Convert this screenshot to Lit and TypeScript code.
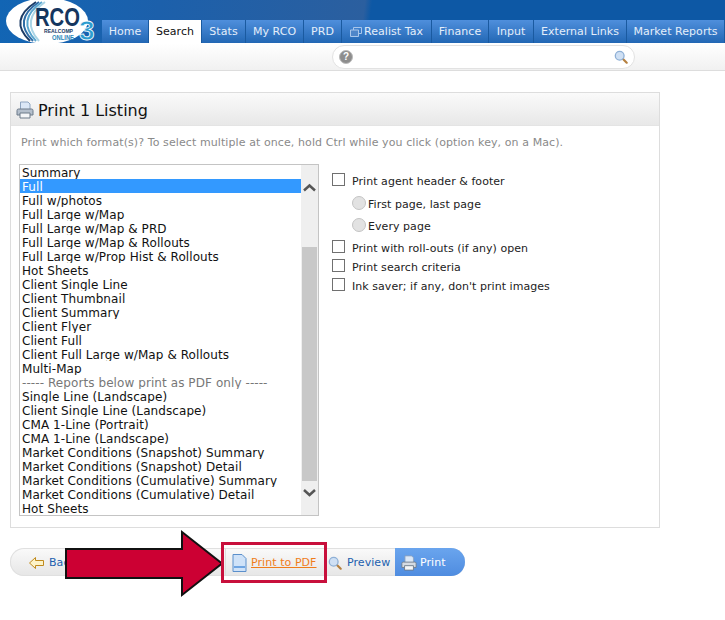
import { LitElement, html, css, svg } from 'lit';
import { customElement } from 'lit/decorators.js';

const TABS: [string, number][] = [
  ['Home', 47], ['Search', 53], ['Stats', 44], ['My RCO', 58], ['PRD', 38], ['Realist Tax', 90],
  ['Finance', 57], ['Input', 45], ['External Links', 93], ['Market Reports', 98],
];

const FORMATS = [
  'Summary', 'Full', 'Full w/photos', 'Full Large w/Map', 'Full Large w/Map & PRD', 'Full Large w/Map & Rollouts',
  'Full Large w/Prop Hist & Rollouts', 'Hot Sheets', 'Client Single Line', 'Client Thumbnail', 'Client Summary',
  'Client Flyer', 'Client Full', 'Client Full Large w/Map & Rollouts', 'Multi-Map',
  '----- Reports below print as PDF only -----', 'Single Line (Landscape)', 'Client Single Line (Landscape)',
  'CMA 1-Line (Portrait)', 'CMA 1-Line (Landscape)', 'Market Conditions (Snapshot) Summary',
  'Market Conditions (Snapshot) Detail', 'Market Conditions (Cumulative) Summary',
  'Market Conditions (Cumulative) Detail', 'Hot Sheets',
];

const printerIcon = (w: number, body = '#b4bfcc') => html`<svg width=${w} height=${w} viewBox="0 0 18 18">
  <path d="M4.500 1h7.500l2 2v6H4.500z" fill="#dbe7f6" stroke="#8ea4bf"/>
  <path d="M2.500 8h13q1.500 0 1.500 1.500V14H1V9.500Q1 8 2.500 8z" fill=${body} stroke="#6d7a89"/>
  <path d="M4 12h10v5H4z" fill="#f4f6f8" stroke="#6d7a89"/>
</svg>`;

const magnifier = (w: number) => html`<svg width=${w} height=${w} viewBox="0 0 16 16">
  <path d="M10 10l4.500 4.500" stroke="#b5803f" stroke-width="2.500" stroke-linecap="round"/>
  <circle cx="6.500" cy="6.500" r="5" fill="#cfe0f4" stroke="#8fb0d6" stroke-width="1.500"/>
</svg>`;

@customElement('app-root')
export class AppRoot extends LitElement {
  static styles = css`
    :host {
      display: block;
      position: relative;
      width: 725px;
      height: 620px;
      overflow: hidden;
      background: #fff;
      font-family: 'DejaVu Sans', Verdana, sans-serif;
      font-size: 11px;
      color: #222;
    }

    .top {
      height: 43px;
      display: flex;
      align-items: flex-end;
      padding-left: 102px;
      box-sizing: border-box;
      background: linear-gradient(97deg, #1265b4 0, #1c60ab 22%, #2b5f9f 50%, #0d58a5 51%, #0d58a5 100%);
      position: relative;
    }

    .logo {
      position: absolute;
      left: 6px;
      top: 0;
      overflow: visible;
    }

    .logo text {
      font-family: 'Liberation Sans', Arial, sans-serif;
    }

    .tab {
      height: 23px;
      box-sizing: border-box;
      border-right: 1px solid #1a5aa0;
      color: #e4eefa;
      white-space: nowrap;
      flex: none;
      background: linear-gradient(#4f8fdc, #2267b4);
      display: flex;
      justify-content: center;
      align-items: center;
      gap: 2px;
      letter-spacing: 0.05px;
    }

    .tab.active {
      background: #fff;
      color: #111;
    }

    .tools {
      height: 28px;
      display: flex;
      box-sizing: border-box;
      padding: 2px 0 0 332px;
      background: linear-gradient(#fff, #f1f1f1);
      border-bottom: 1px solid #ddd;
    }

    .search {
      width: 303px;
      height: 24px;
      box-sizing: border-box;
      background: #fff;
      border: 1px solid #e2e2e2;
      border-radius: 12px;
      display: flex;
      align-items: center;
      justify-content: space-between;
      padding: 0 6px 0 6px;
    }

    .help {
      width: 14px;
      height: 14px;
      border-radius: 50%;
      background: #8d8d8d;
      border: 1px solid #bbb;
      box-sizing: border-box;
      color: #fff;
      font: bold 10px/12px 'Liberation Sans', sans-serif;
      text-align: center;
    }

    .panel {
      margin: 21px 0 0 10px;
      width: 650px;
      height: 436px;
      box-sizing: border-box;
      border: 1px solid #ddd;
    }

    .title {
      height: 33px;
      box-sizing: border-box;
      padding: 2px 5px 0;
      display: flex;
      align-items: center;
      gap: 4px;
      font-size: 16px;
      color: #111;
      background: linear-gradient(#fafafa, #e8e8e8);
      border-bottom: 1px solid #e4e4e4;
    }

    .hint {
      margin: 10px 0 0 10px;
      color: #8a8a8a;
      height: 28px;
      letter-spacing: 0.09px;
    }

    .body {
      display: flex;
      margin: 0 0 0 8px;
    }

    .list {
      width: 300px;
      height: 352px;
      box-sizing: border-box;
      border: 1px solid #c4c4c4;
      display: flex;
      flex: none;
    }

    .rows {
      flex: 1;
      font-size: 12px;
      color: #111;
      letter-spacing: 0.08px;
    }

    .row {
      height: 14px;
      line-height: 16px;
      padding-left: 2px;
      white-space: nowrap;
      overflow: hidden;
    }

    .row.selected {
      background: #3399ff;
      color: #fff;
    }

    .row.divider {
      color: #777;
    }

    .scroll {
      width: 17px;
      background: #efefef;
      display: flex;
      flex-direction: column;
      align-items: center;
    }

    .arrow {
      height: 17px;
      margin-top: 14px;
      flex: none;
    }

    .arrow.down {
      margin-top: 3px;
      margin-bottom: 14px;
    }

    .thumb {
      flex: 1;
      width: 15px;
      background: #c8c8c8;
      margin-top: 51px;
    }

    .options {
      margin: 8px 0 0 13px;
      display: flex;
      flex-direction: column;
      letter-spacing: 0.05px;
    }

    .check {
      display: flex;
      align-items: center;
      gap: 7px;
      height: 19px;
    }

    .box {
      width: 13px;
      height: 13px;
      box-sizing: border-box;
      border: 1px solid #707070;
      background: #fff;
      flex: none;
      margin-bottom: 5px;
    }

    .radios {
      padding: 2px 0 1px;
    }

    .radio {
      display: flex;
      align-items: center;
      gap: 2px;
      height: 22.5px;
      padding-left: 20px;
    }

    .dot {
      width: 14px;
      height: 14px;
      box-sizing: border-box;
      border-radius: 50%;
      border: 1px solid #c4c4c4;
      background: #e2e2e2;
      flex: none;
      margin-bottom: 3px;
    }

    .actions {
      margin: 20px 0 0 10px;
      width: 455px;
      height: 28px;
      display: flex;
      box-sizing: border-box;
      border-radius: 14px;
      overflow: hidden;
      background: linear-gradient(#fafafa, #e6e6e6);
      box-shadow: inset 0 0 0 1px #e0e0e0;
      color: #1d5fae;
      letter-spacing: 0.06px;
    }

    .act {
      display: flex;
      align-items: center;
      gap: 4px;
      flex: none;
      white-space: nowrap;
      padding-top: 1px;
      box-sizing: border-box;
    }

    .back {
      width: 215px;
      padding-left: 19px;
      gap: 5px;
    }

    .pdf {
      width: 101px;
      padding-left: 6px;
      color: #f07d1a;
      text-decoration: underline;
      border-left: 1px solid #ddd;
    }

    .preview {
      width: 69px;
      padding-left: 2px;
      gap: 5px;
    }

    .print {
      flex: 1;
      padding-left: 6px;
      gap: 3px;
      color: #fff;
      background: linear-gradient(#6aa5ee, #4f8ce0);
    }

    .callout {
      position: absolute;
      left: 60px;
      top: 528px;
    }
  `;

  render() {
    return html`
      <div class="top">
        ${this.renderLogo()}
        ${TABS.map(([t, w]) => html`<div class="tab ${t === 'Search' ? 'active' : ''}" style="width: ${w}px">
          ${t === 'Realist Tax' ? html`<svg width="12" height="12" viewBox="0 0 12 12" fill="none" stroke="#a9c6ea">
            <path d="M3.500 1.500h8v6h-8z"/><path d="M.5 4h8v6.500h-8z" fill="#4f86c9"/>
          </svg>` : ''}${t}</div>`)}
      </div>
      <div class="tools">
        <div class="search"><div class="help">?</div>${magnifier(14)}</div>
      </div>
      <div class="panel">
        <div class="title">${printerIcon(18)}Print 1 Listing</div>
        <div class="hint">Print which format(s)? To select multiple at once, hold Ctrl while you click (option key, on a Mac).</div>
        <div class="body">
          <div class="list">
            <div class="rows">
              ${FORMATS.map((f, i) => html`<div class="row ${i === 1 ? 'selected' : ''} ${f.startsWith('-----') ? 'divider' : ''}">${f}</div>`)}
            </div>
            <div class="scroll">
              <svg class="arrow" width="13" height="17" viewBox="0 0 13 17"><path d="M1 11.500l5.500-5 5.500 5" fill="none" stroke="#555" stroke-width="2.500"/></svg>
              <div class="thumb"></div>
              <svg class="arrow down" width="13" height="17" viewBox="0 0 13 17"><path d="M1 6l5.500 5 5.500-5" fill="none" stroke="#555" stroke-width="2.500"/></svg>
            </div>
          </div>
          <div class="options">
            <div class="check"><span class="box"></span>Print agent header &amp; footer</div>
            <div class="radios">
              <div class="radio"><span class="dot"></span>First page, last page</div>
              <div class="radio"><span class="dot"></span>Every page</div>
            </div>
            <div class="check"><span class="box"></span>Print with roll-outs (if any) open</div>
            <div class="check"><span class="box"></span>Print search criteria</div>
            <div class="check"><span class="box"></span>Ink saver; if any, don't print images</div>
          </div>
        </div>
      </div>
      <div class="actions">
        <div class="act back">
          <svg width="15" height="12" viewBox="0 0 15 12"><path d="M.5 6L6.500.5v3h8v5h-8v3z" fill="#fdf3c8" stroke="#c08a1e"/></svg>
          Back
        </div>
        <div class="act pdf">
          <svg width="15" height="18" viewBox="0 0 15 18"><path d="M1 .5h9l4 4v13H1z" fill="#cfe2f8" stroke="#5b8fcb"/><path d="M2 12h11v2H2z" fill="#6fa5e2"/></svg>
          Print to PDF
        </div>
        <div class="act preview">${magnifier(14)}Preview</div>
        <div class="act print">${printerIcon(16, '#d5dbe3')}Print</div>
      </div>
      ${this.renderCallout()}
    `;
  }

  renderLogo() {
    return html`<svg class="logo" width="94" height="43" viewBox="0 0 94 43">
      <ellipse cx="41" cy="21" rx="41" ry="23" fill="#fff"/>
      ${[0, 1, 2, 3].map((i) => svg`<path d="M${30 + i * 3} 2Q${2 + i * 4} 20 ${24 + i * 3} 41" fill="none" stroke=${['#1d3c66', '#2f6ca6', '#5aa6cf', '#a9d4e6'][i]} stroke-width="2"/>`)}
      <text x="29" y="26" font-size="26" font-weight="bold" fill="#14365f" textLength="45" lengthAdjust="spacingAndGlyphs">RCO</text>
      <text x="38" y="33" font-size="5.500" font-weight="bold" fill="#14365f" textLength="29" lengthAdjust="spacingAndGlyphs">REALCOMP</text>
      <text x="46" y="40" font-size="7" font-weight="bold" fill="#2c86b8" textLength="22" lengthAdjust="spacingAndGlyphs">ONLINE</text>
      <text x="73" y="40" font-size="28" font-weight="bold" fill="#2c9ccf" stroke="#fff" stroke-width=".8">3</text>
    </svg>`;
  }

  renderCallout() {
    return html`<svg class="callout" width="270" height="70" viewBox="60 528 270 70">
      <path d="M66 549H182V532L222 563.500 182 595V578H66z" fill="#cc0033" stroke="#111" stroke-width="2"/>
      <rect x="222.500" y="543.500" width="103" height="38" fill="none" stroke="#c8103c" stroke-width="3"/>
    </svg>`;
  }
}
